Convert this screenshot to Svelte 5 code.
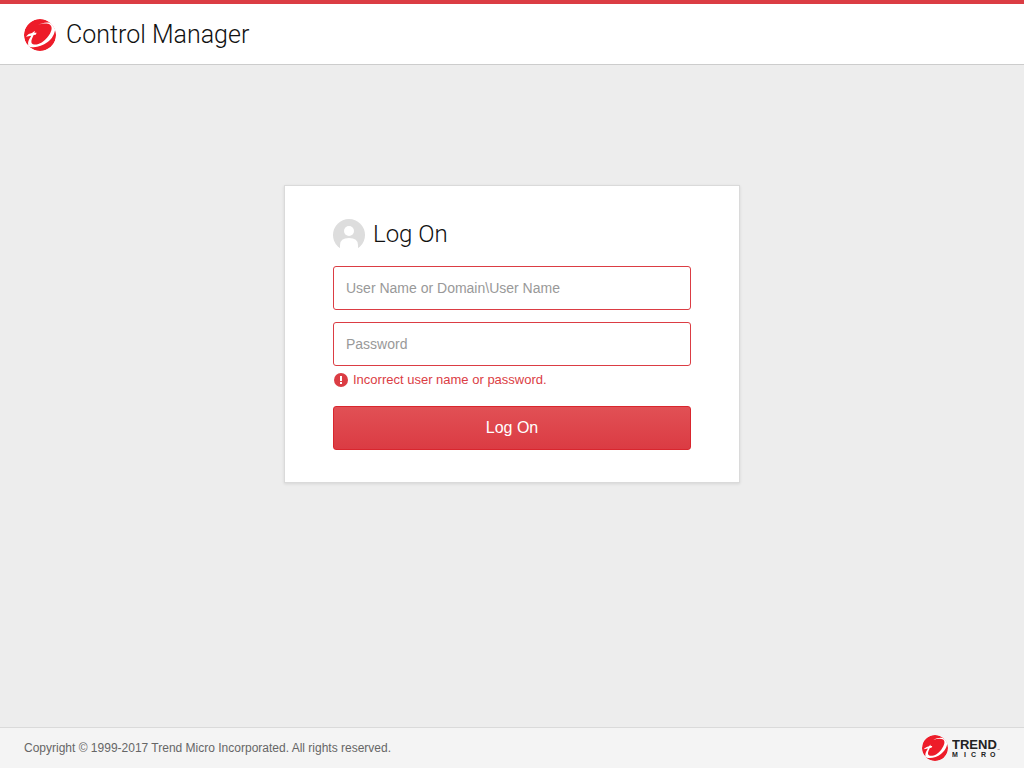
<script>
  let username = $state('');
  let password = $state('');
</script>

{#snippet mark()}
  <svg class="mark" viewBox="0 0 96 96" aria-hidden="true">
    <circle cx="48" cy="48" r="48" fill="#ed1c29" />
    <path
      fill="#fff"
      d="M42 18C58 8 78 8 86 16L94 26C93 44 84 60 70 70C52 84 26 89 8 80L0 64C4 74 8 78 13 77C11 72 13 66 16 60L22 50L6 53C11 46 17 43 24 42L33 35L31 41L38 41L35 47L29 48L24 59C21 67 21 73 27 76C42 80 59 69 71 54C83 39 87 24 78 17C70 12 56 13 42 18Z"
    />
  </svg>
{/snippet}

<div class="page">
  <header>
    {@render mark()}
    <h1>Control Manager</h1>
  </header>

  <main>
    <form onsubmit={(event) => event.preventDefault()}>
      <div class="heading">
        <svg class="avatar" viewBox="0 0 32 32" aria-hidden="true">
          <circle cx="16" cy="16" r="16" fill="#ddd" />
          <circle cx="16" cy="12" r="5" fill="#fff" />
          <path fill="#fff" d="M7 32V26Q7 19 16 19Q25 19 25 26V32Z" />
        </svg>
        <h2>Log On</h2>
      </div>
      <input
        type="text"
        aria-label="User Name or Domain\User Name"
        placeholder="User Name or Domain\User Name"
        autocomplete="username"
        bind:value={username}
      />
      <input
        type="password"
        aria-label="Password"
        placeholder="Password"
        autocomplete="current-password"
        aria-describedby="logon-error"
        bind:value={password}
      />
      <p class="error" id="logon-error">
        <svg viewBox="0 0 14 14" aria-hidden="true">
          <circle cx="7" cy="7" r="7" fill="#db3d44" />
          <path fill="#fff" d="M6 3h2v5H6zM6 9h2v2H6z" />
        </svg>
        Incorrect user name or password.
      </p>
      <button type="submit">Log On</button>
    </form>
  </main>

  <footer>
    <p>Copyright © 1999-2017 Trend Micro Incorporated. All rights reserved.</p>
    <div class="brand">
      {@render mark()}
      <svg class="wordmark" viewBox="0 0 48 26" role="img" aria-label="Trend Micro">
        <text x="0" y="14" font-size="13" font-weight="700">TREND</text>
        <g font-size="7" font-weight="700">
          <text x="0" y="22">M</text>
          <text x="12" y="22">I</text>
          <text x="19" y="22">C</text>
          <text x="29" y="22">R</text>
          <text x="38" y="22">O</text>
        </g>
        <text x="45" y="16" font-size="3">™</text>
      </svg>
    </div>
  </footer>
</div>

<style>
  :global(body) {
    margin: 0;
  }

  .page {
    display: flex;
    flex-direction: column;
    min-height: 100vh;
    box-sizing: border-box;
    border-top: 4px solid #db3d44;
    background: #ededed;
    color: #222;
    font-family: 'Liberation Sans', Arial, sans-serif;
  }

  header {
    display: flex;
    align-items: center;
    gap: 10px;
    box-sizing: border-box;
    height: 61px;
    padding: 2px 24px 0;
    border-bottom: 1px solid #ccc;
    background: #fff;
  }

  .mark {
    display: block;
    width: 32px;
    height: 32px;
    border-radius: 50%;
  }

  h1,
  h2 {
    margin: 0;
    font-family: Roboto, 'Open Sans', sans-serif;
    font-weight: 300;
    color: #111;
  }

  h1 {
    font-size: 25px;
    line-height: 32px;
  }

  h2 {
    font-size: 24px;
    line-height: 30px;
  }

  main {
    flex: 1;
    padding: 120px 24px 24px;
  }

  form {
    box-sizing: border-box;
    max-width: 456px;
    margin: 0 auto;
    padding: 32px 48px;
    border: 1px solid #dadada;
    background: #fff;
    box-shadow: 0 1px 3px rgba(0, 0, 0, 0.1);
  }

  .heading {
    display: flex;
    align-items: flex-start;
    gap: 8px;
    padding: 1px 0 15px;
  }

  .avatar {
    width: 32px;
    height: 32px;
  }

  input {
    display: block;
    box-sizing: border-box;
    width: 100%;
    height: 44px;
    margin: 0 0 12px;
    padding: 0 12px;
    border: 1px solid #db3d44;
    border-radius: 3px;
    background: #fff;
    color: #222;
    font: 14px 'Liberation Sans', Arial, sans-serif;
  }

  input[type='password'] {
    margin-bottom: 4px;
  }

  input::placeholder {
    color: #999;
    opacity: 1;
  }

  .error {
    display: flex;
    align-items: center;
    gap: 5px;
    margin: 0 0 16px;
    padding-left: 1px;
    color: #db3d44;
    font-size: 13px;
    line-height: 20px;
  }

  .error svg {
    width: 14px;
    height: 14px;
  }

  button {
    display: block;
    width: 100%;
    height: 44px;
    padding: 0;
    border: 1px solid #d9262e;
    border-radius: 3px;
    background: linear-gradient(#e15055, #db3b43);
    color: #fff;
    font: 16px 'Liberation Sans', Arial, sans-serif;
    cursor: pointer;
  }

  footer {
    display: flex;
    align-items: center;
    justify-content: space-between;
    height: 40px;
    padding: 0 24px;
    border-top: 1px solid #dadada;
    background: #f4f4f4;
    color: #666;
    font-size: 12px;
  }

  footer p {
    margin: 0;
  }

  .brand {
    display: flex;
    align-items: center;
    gap: 4px;
  }

  .brand .mark {
    width: 26px;
    height: 26px;
  }

  .wordmark {
    width: 48px;
    height: 26px;
    fill: #222;
  }
</style>
